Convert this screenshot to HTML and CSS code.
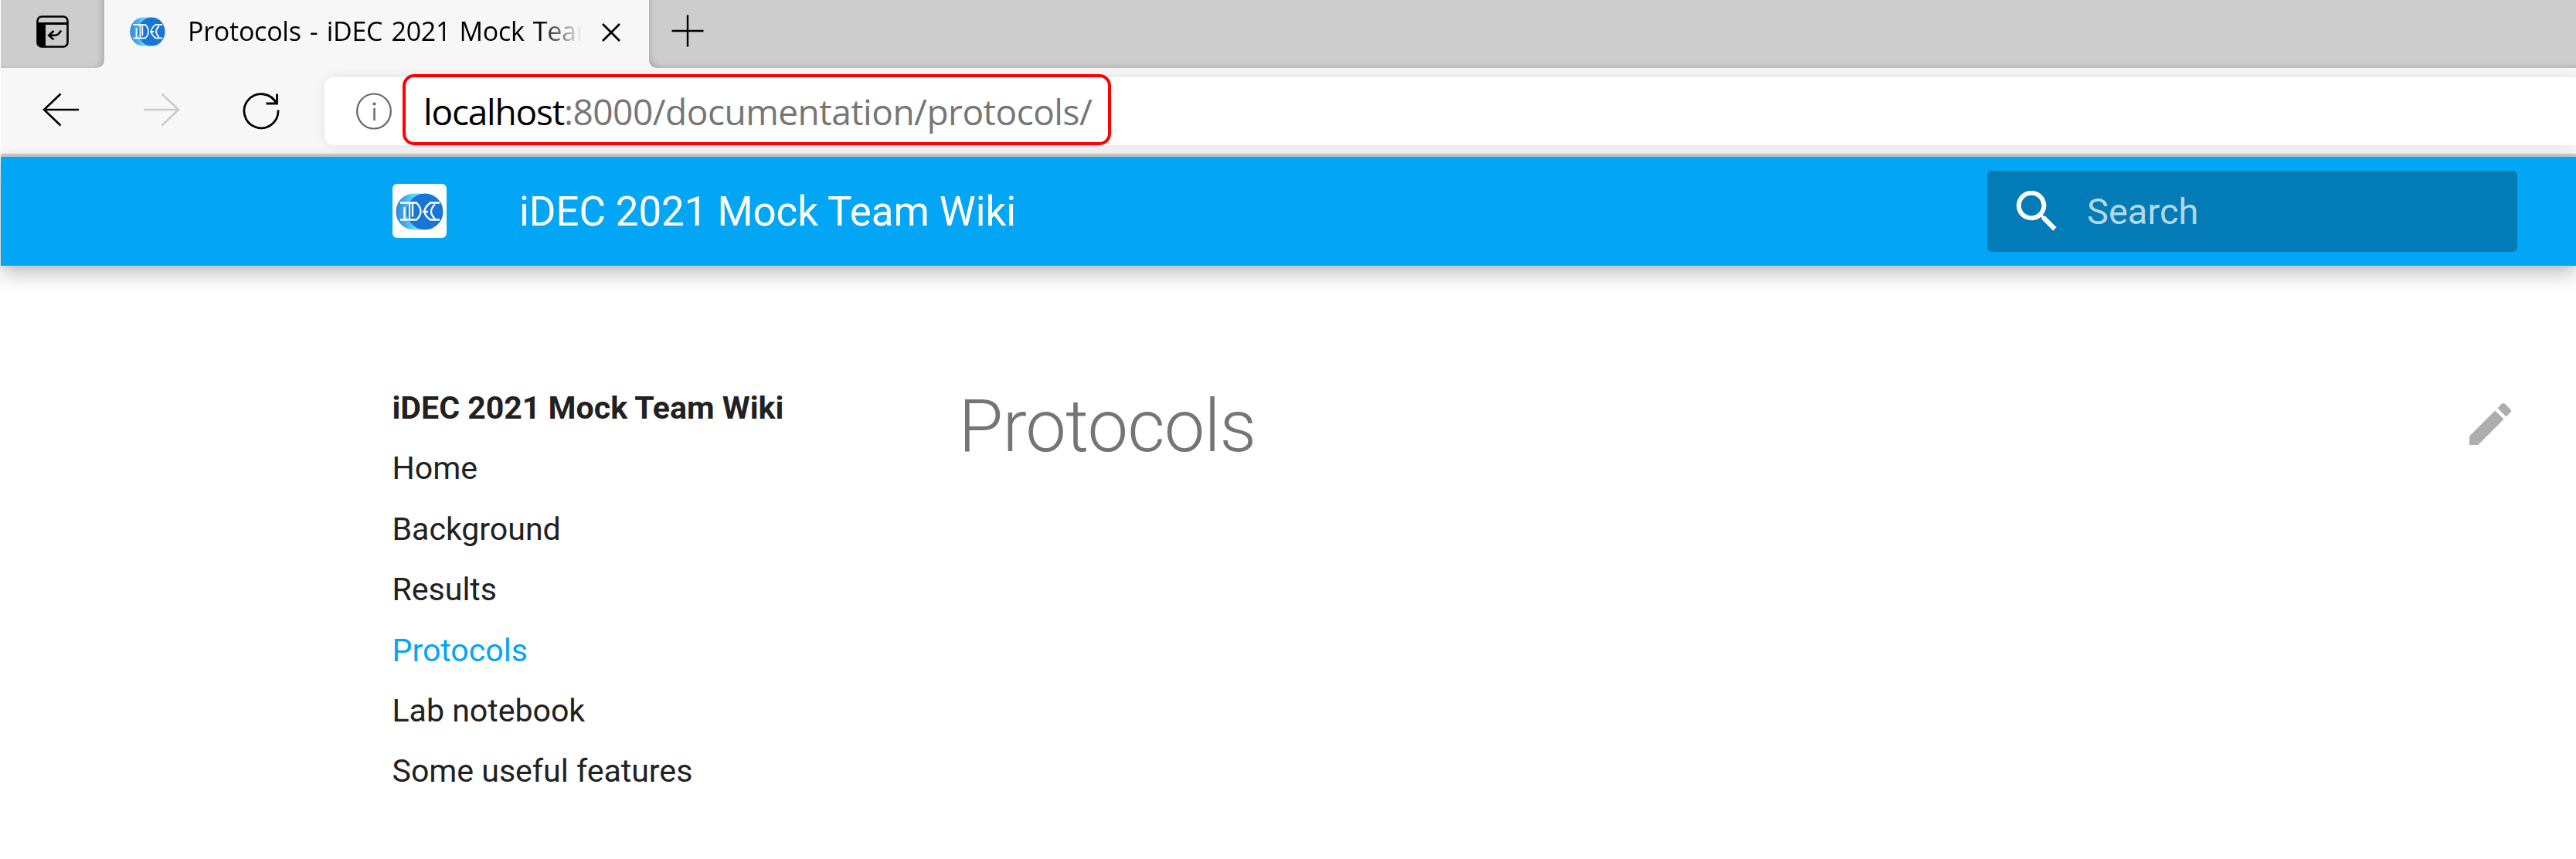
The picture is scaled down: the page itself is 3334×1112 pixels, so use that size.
FILE: index.html
```html
<!DOCTYPE html>
<html lang="en">
<head>
<meta charset="utf-8">
<title>Protocols - iDEC 2021 Mock Team Wiki</title>
<link rel="stylesheet" href="styles.css">
</head>
<body>
<div class="window">
  <div class="tabstrip">
    <div class="strip-left">
      <svg class="ic-panel" viewBox="0 0 42 42" width="42" height="42">
        <rect x="1.5" y="1.5" width="39" height="39" rx="5.5" fill="none" stroke="#000" stroke-width="2.6"/>
        <path d="M2 9h38v3H12v28H6q-4 0-4-4z" fill="#000"/>
        <path d="M32 19.500q-3 6-8 6.300H17M22.500 20l-6.300 5.700 6.300 5.500" fill="none" stroke="#000" stroke-width="2.6"/>
      </svg>
    </div>
    <div class="tab">
      <svg class="favicon" viewBox="0 0 62 48" width="46" height="38" preserveAspectRatio="none">
        <use href="#idec"/>
      </svg>
      <div class="tab-title">Protocols - iDEC 2021 Mock Team Wiki</div>
      <svg class="ic-close" viewBox="0 0 24 24" width="24" height="24"><path d="M1 1l22 22M23 1L1 23" stroke="#000" stroke-width="2.8"/></svg>
    </div>
    <div class="strip-right">
      <svg viewBox="0 0 42 42" width="42" height="42"><path d="M21 .5v41M.5 21h41" stroke="#000" stroke-width="2.4"/></svg>
    </div>
  </div>
  <div class="toolbar">
    <svg class="ic-back" viewBox="0 0 48 44" width="48" height="44"><path d="M23.500 1.500L2 22l21.500 20.500M2 22h45" fill="none" stroke="#000" stroke-width="2.600"/></svg>
    <svg class="ic-fwd" viewBox="0 0 48 44" width="48" height="44"><path d="M24.500 1.500L46 22 24.500 42.500M46 22H1" fill="none" stroke="#ccc" stroke-width="2.600"/></svg>
    <svg class="ic-reload" viewBox="0 0 48 48" width="48" height="48"><path d="M46 22.500A22 22 0 1 1 44 14.500M44.500 1.500V14H30.500" fill="none" stroke="#000" stroke-width="2.800"/></svg>
    <div class="address">
      <svg class="ic-info" viewBox="0 0 46 48" width="46" height="48"><ellipse cx="23" cy="24" rx="21.800" ry="22.500" fill="none" stroke="#666" stroke-width="2.200"/><path d="M23.500 20v16" stroke="#666" stroke-width="2.400"/><circle cx="23.500" cy="14.500" r="2" fill="#666"/></svg>
      <div class="url"><span class="host">localhost</span>:8000/documentation/protocols/</div>
    </div>
  </div>
  <div class="page">
    <header class="header">
      <div class="logo">
        <svg viewBox="0 0 62 48" width="62" height="48">
          <defs>
            <linearGradient id="rim" x1="0" x2="1"><stop offset="0" stop-color="#2f86dc"/><stop offset=".18" stop-color="#3fa4ea"/><stop offset=".45" stop-color="#62dcff"/></linearGradient>
            <g id="idec">
              <rect x=".5" y=".5" width="54" height="47" rx="23" fill="url(#rim)"/>
              <ellipse cx="38" cy="24" rx="23.500" ry="23.500" fill="#1976d6"/>
              <g fill="none" stroke="#fff" stroke-width="2.300">
                <path d="M6 12.500H27Q38 24 27 34.500H6M11.500 18v16M18 12.500v22M22 12.500v18M35 24h7M57 12.500H45Q30 24 45 34.500H57M51 14.500Q41 24 51 33"/>
              </g>
            </g>
          </defs>
          <use href="#idec"/>
        </svg>
      </div>
      <div class="site-title">iDEC 2021 Mock Team Wiki</div>
      <div class="search">
        <svg viewBox="0 0 24 24" width="71" height="71"><path fill="#fff" d="M9.500 3A6.500 6.500 0 0 1 16 9.500c0 1.610-.59 3.090-1.560 4.230l.27.270h.79l5 5-1.500 1.500-5-5v-.79l-.27-.27A6.516 6.516 0 0 1 9.500 16 6.500 6.500 0 0 1 3 9.500 6.500 6.500 0 0 1 9.500 3m0 2C7 5 5 7 5 9.500S7 14 9.500 14 14 12 14 9.500 12 5 9.500 5z"/></svg>
        <span>Search</span>
      </div>
    </header>
    <main class="main">
      <nav class="nav">
        <div class="nav-title">iDEC 2021 Mock Team Wiki</div>
        <a>Home</a>
        <a>Background</a>
        <a>Results</a>
        <a class="active">Protocols</a>
        <a>Lab notebook</a>
        <a>Some useful features</a>
      </nav>
      <article class="content">
        <h1>Protocols</h1>
        <svg class="ic-edit" viewBox="0 0 24 24" width="72" height="72"><path fill="#adadad" d="M20.710 7.040c.39-.39.39-1.040 0-1.410l-2.340-2.340c-.37-.39-1.020-.39-1.410 0l-1.840 1.830 3.750 3.750M3 17.250V21h3.750L17.810 9.930l-3.750-3.750L3 17.250z"/></svg>
      </article>
    </main>
  </div>
</div>
</body>
</html>
```
FILE: styles.css
```css
* { box-sizing: border-box; }
body { margin: 0; background: #fff; font-family: Roboto, sans-serif; }
svg { display: block; flex: none; }
.window { height: 1112px; padding-left: 1px; overflow: hidden; display: flex; flex-direction: column; }

.tabstrip { display: flex; height: 88px; background: #f7f7f7; }
.strip-left, .strip-right { background: #cdcdcd; height: 88px; }
.strip-left { width: 134px; padding: 20px 0 0 46px; border-bottom-right-radius: 10px; box-shadow: inset -7px -2px 8px -5px #00000030; }
.strip-right { flex: 1; padding: 19px 0 0 29px; border-bottom-left-radius: 10px; box-shadow: inset 5px -5px 8px -5px #00000038; }
.tab { display: flex; width: 705px; background: #f7f7f7; }
.favicon { margin: 22px 0 0 33px; }
.tab-title {
  width: 511px; margin-left: 29px; height: 84px; overflow: hidden; white-space: nowrap;
  font: 400 34px/81px "Open Sans", "Noto Sans", sans-serif; letter-spacing: -.25px; word-spacing: 2.600px; color: #000;
  -webkit-mask-image: linear-gradient(90deg, #000 455px, transparent 511px);
  mask-image: linear-gradient(90deg, #000 455px, transparent 511px);
}
.ic-close { margin: 30px 0 0 25px; }

.toolbar { display: flex; height: 115px; background: #f7f7f7; border-bottom: 4px solid #cfcfcf; }
.ic-back { margin: 32px 0 0 54px; }
.ic-fwd { margin: 32px 0 0 82px; }
.ic-reload { margin: 32px 0 0 81px; }
.address { display: flex; flex: 1; height: 88px; margin: 12px 0 0 58px; background: #fff; border-radius: 12px 0 0 12px; box-shadow: 0 0 16px #00000018; }
.ic-info { margin: 20px 0 0 41px; }
.url {
  height: 92px; width: 917px; margin: -4px 0 0 14px; padding-left: 23px; border: 4px solid #f00; border-radius: 15px;
  white-space: nowrap; font: 400 46px/88px "Open Sans", "Noto Sans", sans-serif; letter-spacing: -.5px; color: #767676;
}
.host { color: #000; letter-spacing: -1.200px; }

.page { flex: 1; background: #fff; }
.header { display: flex; height: 141px; background: #03a6f4; box-shadow: 0 0 12px #0000001a, 0 12px 24px #00000038; }
.logo { width: 70px; height: 70px; margin: 35px 0 0 507px; padding: 12px 4px 10px; background: #fff; border-radius: 6px; }
.site-title { width: 1900px; margin-left: 94px; font-size: 52.900px; line-height: 142px; letter-spacing: -.08px; color: #fff; white-space: nowrap; }
.search { display: flex; align-items: center; width: 686px; height: 105px; margin-top: 18px; padding-left: 29px; background: #027bb6; border-radius: 6px; }
.search span { margin-left: 29px; font-size: 47px; line-height: 105px; color: #b3d7e9; }

.main { display: flex; padding: 145px 0 0 506.500px; }
.nav { width: 733px; font-size: 41.100px; line-height: 78.400px; color: #212121; }
.nav a, .nav-title { display: block; white-space: nowrap; letter-spacing: -.02px; }
.nav-title { font-weight: 700; }
.nav .active { color: #03a6f4; }
.content { display: flex; justify-content: space-between; align-items: flex-start; width: 2018px; padding-top: 2px; }
.content h1 { margin: 0; font-weight: 300; font-size: 94px; line-height: 122px; letter-spacing: -.01em; color: #757575; }
.ic-edit { margin-top: 22px; }
```
